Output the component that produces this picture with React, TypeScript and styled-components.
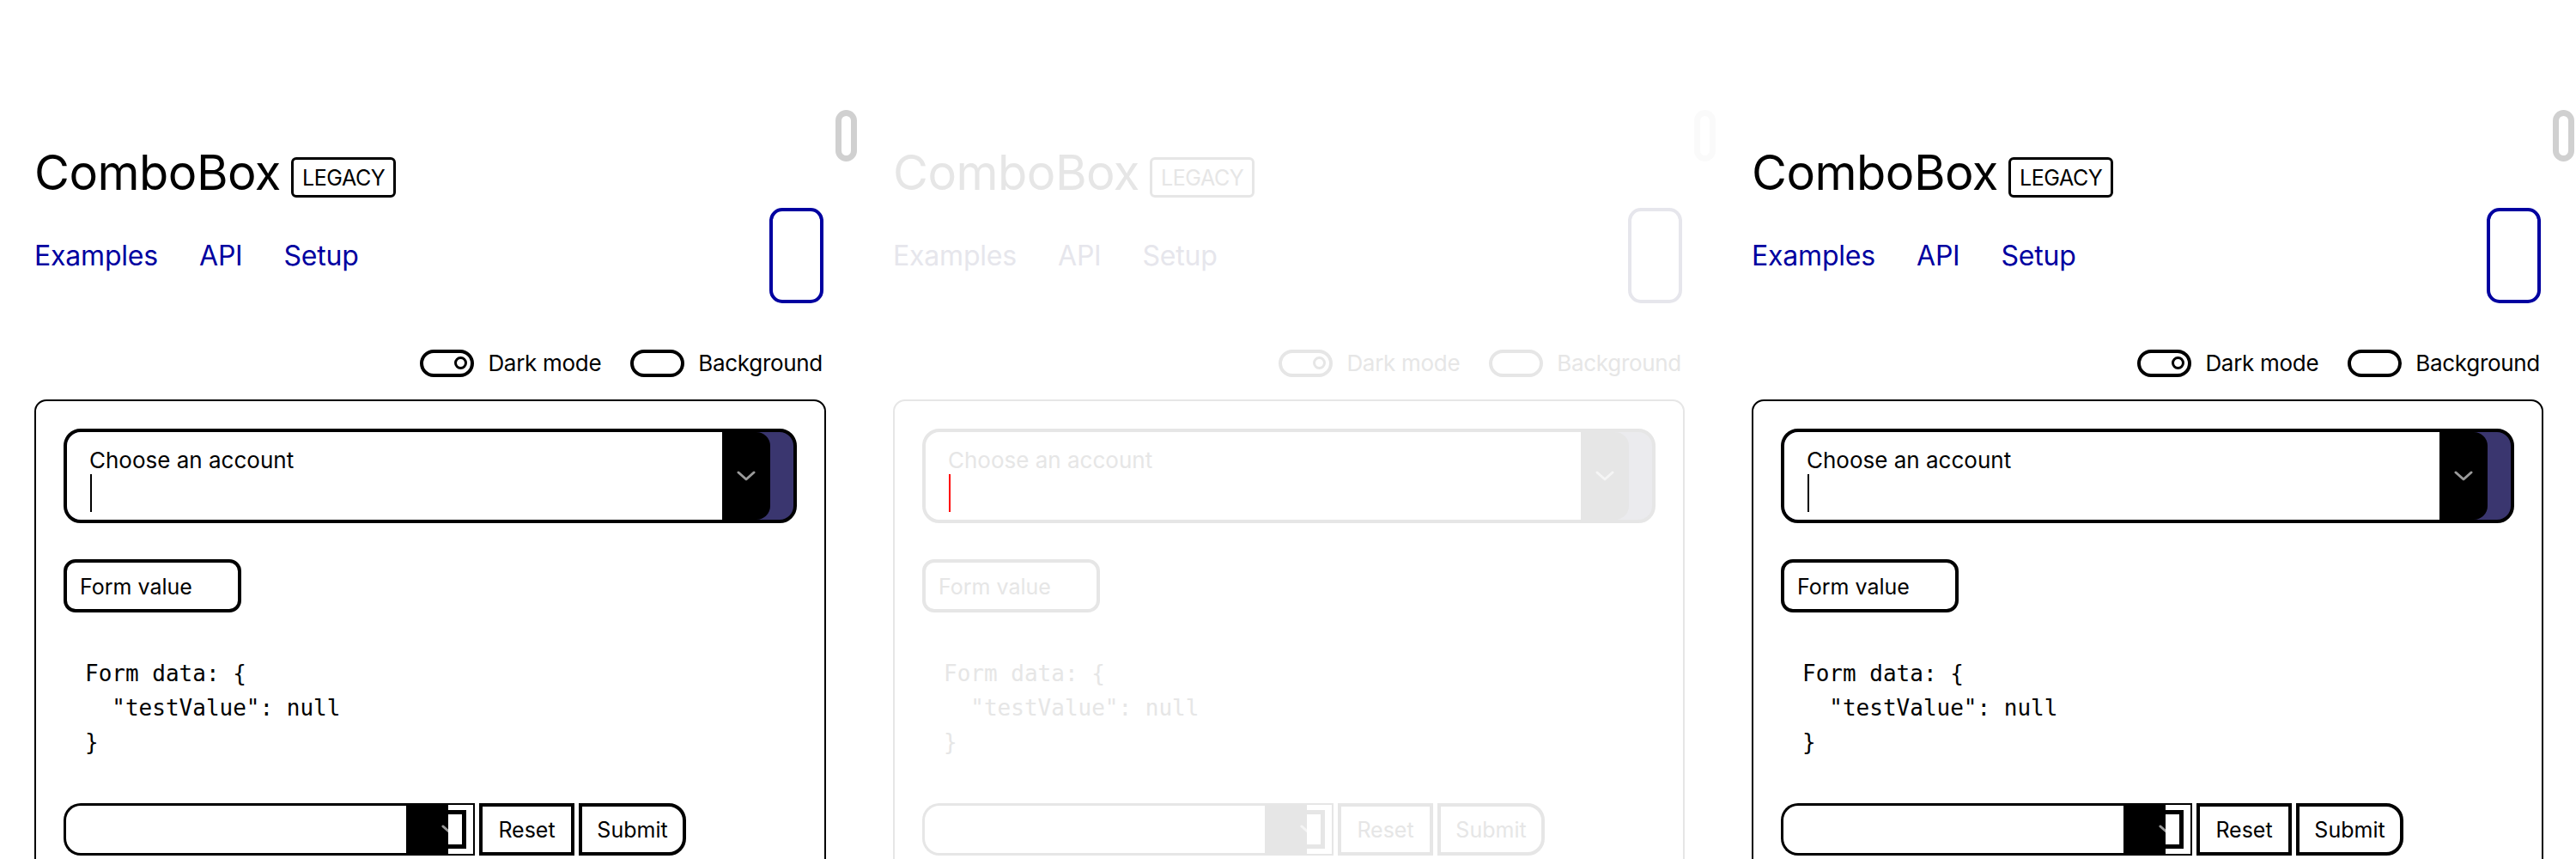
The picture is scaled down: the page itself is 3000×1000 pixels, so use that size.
import React from 'react';
import styled, { createGlobalStyle, css } from 'styled-components';

const GlobalStyle = createGlobalStyle`
  html, body {
    margin: 0;
    padding: 0;
    overflow: hidden;
    background: #ffffff;
  }
  body {
    font-family: 'Inter', 'Noto Sans', sans-serif;
  }
`;

const Screen = styled.div`
  display: flex;
  width: 3000px;
  height: 1000px;
  overflow: hidden;
`;

const fadedVars = css`
  --fg: #e6e6e6;
  --link: #e6e6ec;
  --purple: #ebebee;
  --chevron: #f5f5f5;
  --thumb: #fafafa;
  --caret: #ff0000;
`;

const Panel = styled.section<{ $faded?: boolean }>`
  --fg: #000000;
  --link: #0000a0;
  --purple: #3a366f;
  --chevron: #9a9a9a;
  --thumb: #d0d0d0;
  --caret: #000000;
  ${props => props.$faded && fadedVars}
  position: relative;
  flex: 0 0 1000px;
  box-sizing: border-box;
  padding: 168px 0 0 40px;
  color: var(--fg);
`;

const ScrollThumb = styled.div`
  position: absolute;
  left: 973px;
  top: 128px;
  width: 25px;
  height: 60px;
  box-sizing: border-box;
  border: 7px solid var(--thumb);
  border-radius: 13px;
`;

const Content = styled.div`
  width: 922px;
`;

const TitleRow = styled.div`
  display: flex;
  align-items: center;
  gap: 12px;
  height: 67px;
`;

const Title = styled.h1`
  margin: 0;
  font-size: 56px;
  font-weight: 400;
  line-height: 67px;
  letter-spacing: -0.5px;
`;

const Badge = styled.span`
  display: inline-flex;
  align-items: center;
  box-sizing: border-box;
  height: 47px;
  margin-top: 10px;
  padding: 0 10px;
  border: 3px solid var(--fg);
  border-radius: 6px;
  font-size: 25px;
  letter-spacing: -0.4px;
`;

const NavRow = styled.nav`
  display: flex;
  align-items: center;
  justify-content: space-between;
  margin-top: 7px;
`;

const NavLinks = styled.div`
  display: flex;
  gap: 48px;
`;

const NavLink = styled.a`
  color: var(--link);
  font-size: 32px;
  line-height: 38px;
  text-decoration: none;
  letter-spacing: -0.2px;
`;

const MenuBox = styled.div`
  width: 63px;
  height: 111px;
  box-sizing: border-box;
  margin-right: 3px;
  border: 4px solid var(--link);
  border-radius: 15px;
`;

const ToggleBar = styled.div`
  display: flex;
  justify-content: flex-end;
  align-items: center;
  gap: 34px;
  height: 33px;
  margin-top: 53px;
  padding-right: 4px;
`;

const ToggleItem = styled.label`
  display: flex;
  align-items: center;
  gap: 16px;
  font-size: 26px;
  letter-spacing: -0.3px;
`;

const SwitchTrack = styled.span`
  display: flex;
  align-items: center;
  justify-content: flex-end;
  width: 63px;
  height: 32px;
  box-sizing: border-box;
  padding-right: 4px;
  border: 4px solid var(--fg);
  border-radius: 16px;
`;

const SwitchKnob = styled.span`
  width: 15px;
  height: 15px;
  box-sizing: border-box;
  border: 3px solid var(--fg);
  border-radius: 50%;
`;

const Card = styled.div`
  margin-top: 26px;
  padding: 32px 32px 60px;
  border: 2px solid var(--fg);
  border-radius: 14px;
`;

const Combo = styled.div`
  display: flex;
  height: 110px;
  box-sizing: border-box;
  padding-right: 27px;
  border: 4px solid var(--fg);
  border-radius: 20px;
  background: var(--purple);
  overflow: hidden;
`;

const ComboField = styled.div`
  flex: 1;
  padding: 17px 26px 16px;
  background: #ffffff;
`;

const ComboLabel = styled.div`
  font-size: 26px;
  line-height: 31px;
  letter-spacing: 0;
`;

const Caret = styled.div`
  width: 2px;
  height: 44px;
  margin: 1px 0 0 1px;
  background: var(--caret);
`;

const ComboButton = styled.button`
  display: flex;
  align-items: center;
  justify-content: center;
  width: 56px;
  padding: 0;
  border: none;
  border-radius: 0 16px 16px 0;
  background: var(--fg);
`;

const FormValueButton = styled.button`
  display: block;
  width: 207px;
  height: 62px;
  margin-top: 42px;
  padding: 2px 15px 0;
  border: 4px solid var(--fg);
  border-radius: 14px;
  background: #ffffff;
  color: var(--fg);
  font-family: 'Inter', sans-serif;
  font-size: 25px;
  letter-spacing: 0;
  text-align: left;
`;

const DataDump = styled.pre`
  margin: 51px 0 0 25px;
  font-family: 'DejaVu Sans Mono', 'Liberation Mono', monospace;
  font-size: 26px;
  line-height: 40px;
  color: var(--fg);
`;

const ActionRow = styled.div`
  display: flex;
  gap: 5px;
  height: 61px;
  margin-top: 51px;
`;

const MiniCombo = styled.div`
  display: flex;
  width: 479px;
`;

const MiniField = styled.div`
  flex: 1;
  border: 3px solid var(--fg);
  border-right: none;
  border-radius: 20px 0 0 20px;
  background: #ffffff;
`;

const MiniToggle = styled.div`
  display: flex;
  align-items: center;
  justify-content: flex-end;
  width: 49px;
  overflow: hidden;
  background: var(--fg);
`;

const MiniCap = styled.div`
  display: flex;
  width: 31px;
  box-sizing: border-box;
  padding: 6px 8px 6px 0;
  border: 2px solid var(--fg);
  border-left: none;
  background: #ffffff;
`;

const MiniCapInner = styled.div`
  flex: 1;
  border: 5px solid var(--fg);
  border-left: none;
  background: #ffffff;
`;

const ActionButton = styled.button<{ $last?: boolean }>`
  width: ${props => (props.$last ? 125 : 111)}px;
  border: 4px solid var(--fg);
  border-radius: ${props => (props.$last ? '0 20px 20px 0' : '0')};
  background: #ffffff;
  color: var(--fg);
  font-family: 'Inter', sans-serif;
  font-size: 25px;
  letter-spacing: 0;
`;

const Chevron = ({ size = 22 }: { size?: number }) => (
  <svg width={size} height={size / 2 + 1} viewBox="0 0 22 12" fill="none">
    <polyline
      points="2,2 11,10 20,2"
      stroke="var(--chevron)"
      strokeWidth="3"
      strokeLinecap="round"
      strokeLinejoin="round"
    />
  </svg>
);

const MiniChevron = styled.span`
  display: flex;
  margin-right: -12px;
`;

const Demo = ({ faded }: { faded?: boolean }) => (
  <Panel $faded={faded}>
    <ScrollThumb />
    <Content>
      <TitleRow>
        <Title>ComboBox</Title>
        <Badge>LEGACY</Badge>
      </TitleRow>
      <NavRow>
        <NavLinks>
          <NavLink href="#examples">Examples</NavLink>
          <NavLink href="#api">API</NavLink>
          <NavLink href="#setup">Setup</NavLink>
        </NavLinks>
        <MenuBox />
      </NavRow>
      <ToggleBar>
        <ToggleItem>
          <SwitchTrack>
            <SwitchKnob />
          </SwitchTrack>
          Dark mode
        </ToggleItem>
        <ToggleItem>
          <SwitchTrack />
          Background
        </ToggleItem>
      </ToggleBar>
      <Card>
        <Combo>
          <ComboField>
            <ComboLabel>Choose an account</ComboLabel>
            <Caret />
          </ComboField>
          <ComboButton aria-label="Open">
            <Chevron />
          </ComboButton>
        </Combo>
        <FormValueButton>Form value</FormValueButton>
        <DataDump>{'Form data: {\n  "testValue": null\n}'}</DataDump>
        <ActionRow>
          <MiniCombo>
            <MiniField />
            <MiniToggle>
              <MiniChevron>
                <Chevron size={20} />
              </MiniChevron>
            </MiniToggle>
            <MiniCap>
              <MiniCapInner />
            </MiniCap>
          </MiniCombo>
          <ActionButton>Reset</ActionButton>
          <ActionButton $last>Submit</ActionButton>
        </ActionRow>
      </Card>
    </Content>
  </Panel>
);

export default function App() {
  return (
    <>
      <GlobalStyle />
      <Screen>
        <Demo />
        <Demo faded />
        <Demo />
      </Screen>
    </>
  );
}
